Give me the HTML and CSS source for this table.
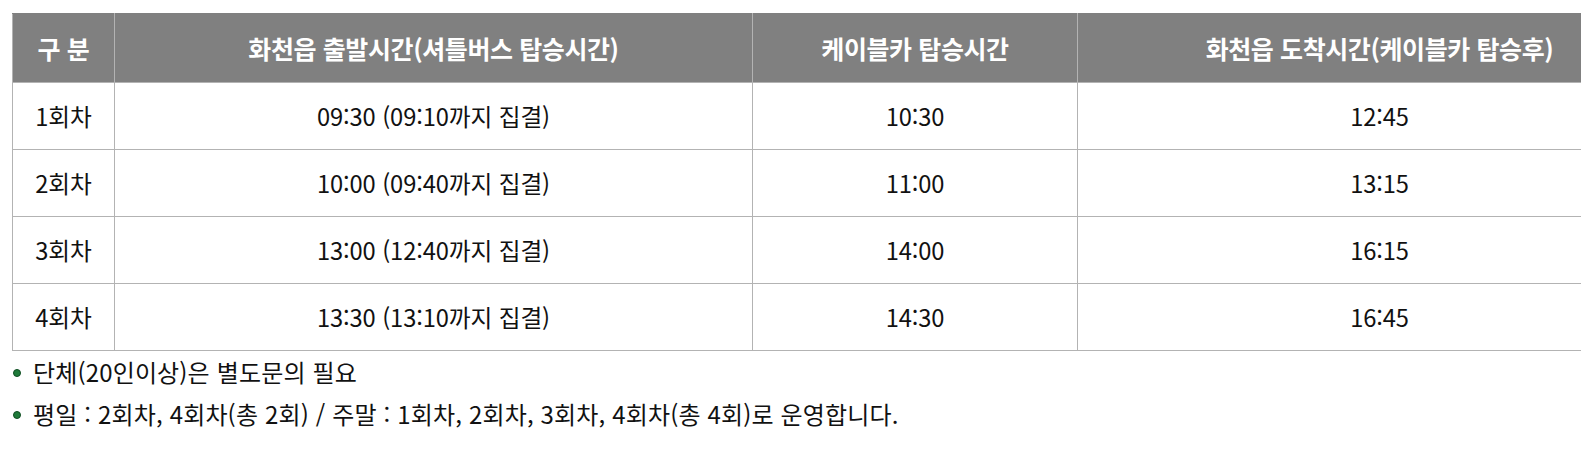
FILE: index.html
```html
<!DOCTYPE html>
<html lang="ko">
<head>
<meta charset="utf-8">
<link rel="stylesheet" href="styles.css">
</head>
<body>
<div class="wrap">
  <div class="clip">
    <table class="schedule">
      <thead>
        <tr>
          <th class="c1">구 분</th>
          <th class="c2">화천읍 출발시간(셔틀버스 탑승시간)</th>
          <th class="c3">케이블카 탑승시간</th>
          <th class="c4">화천읍 도착시간(케이블카 탑승후)</th>
        </tr>
      </thead>
      <tbody>
        <tr><td>1회차</td><td>09:30 (09:10까지 집결)</td><td>10:30</td><td>12:45</td></tr>
        <tr><td>2회차</td><td>10:00 (09:40까지 집결)</td><td>11:00</td><td>13:15</td></tr>
        <tr><td>3회차</td><td>13:00 (12:40까지 집결)</td><td>14:00</td><td>16:15</td></tr>
        <tr class="last"><td>4회차</td><td>13:30 (13:10까지 집결)</td><td>14:30</td><td>16:45</td></tr>
      </tbody>
    </table>
  </div>
  <ul class="notes">
    <li>단체(20인이상)은 별도문의 필요</li>
    <li>평일 : 2회차, 4회차(총 2회) / 주말 : 1회차, 2회차, 3회차, 4회차(총 4회)로 운영합니다.</li>
  </ul>
</div>
</body>
</html>
```

FILE: styles.css
```css
html, body {
  margin: 0;
  padding: 0;
  background: #fff;
  overflow: hidden;
}
body {
  font-family: "Noto Sans CJK KR", "Noto Sans", sans-serif;
  color: #111;
}
.wrap {
  padding: 13px 0 0 12px;
}
.clip {
  overflow: hidden;
}
.schedule {
  border-collapse: collapse;
  table-layout: fixed;
  width: 1665px;
}
.c1 { width: 101px; }
.c2 { width: 637px; }
.c3 { width: 324px; }
.c4 { width: 603px; }
.schedule th,
.schedule td {
  border: 1px solid #b3b3b3;
  text-align: center;
  padding: 0;
  white-space: nowrap;
}
.schedule th {
  background: #808080;
  color: #fff;
  font-weight: 700;
  font-size: 25px;
  letter-spacing: -0.4px;
  height: 68px;
  border-top-color: #808080;
}
.schedule td {
  height: 66px;
  font-weight: 400;
  font-size: 23.7px;
  letter-spacing: -0.1px;
}
.notes {
  list-style: none;
  margin: 0;
  padding: 0;
}
.notes li {
  position: relative;
  padding-left: 21px;
  font-size: 24px;
  line-height: 42px;
  letter-spacing: 0.15px;
}
.notes li::before {
  content: "";
  position: absolute;
  left: 1px;
  top: 18px;
  width: 6px;
  height: 6px;
  border-radius: 50%;
  background: #1f7a3a;
  border: 1px solid #0f4d22;
}
```
